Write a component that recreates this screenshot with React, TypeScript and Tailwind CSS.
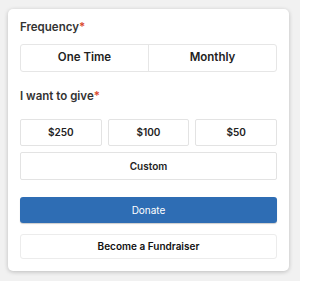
const amounts = ["$250", "$100", "$50"];

const Label = ({ text }: { text: string }) => (
  <p className="text-[11.5px] leading-5 font-semibold text-[#333]">
    {text}
    <span className="text-[#d9472b]">*</span>
  </p>
);

export default function App() {
  return (
    <div
      className="w-[300px] h-[281px] bg-[#f1f1f1] pt-[9px] pl-[8px]"
      style={{ fontFamily: "Inter, 'Noto Sans', sans-serif" }}
    >
      <div className="w-[281px] h-[262px] bg-white rounded-[5px] shadow-[0_1px_4px_rgba(0,0,0,0.22)] px-3 pt-2">
        <Label text="Frequency" />

        {/* frequency toggle */}
        <div className="mt-[7px] flex h-[28px] border border-[#e6e6e6] rounded-[3px]">
          <button className="flex-1 text-[11.5px] font-semibold text-[#222] border-r border-[#e6e6e6]">
            One Time
          </button>
          <button className="flex-1 text-[11.5px] font-semibold text-[#222]">
            Monthly
          </button>
        </div>

        <div className="mt-[14px]">
          <Label text="I want to give" />
        </div>

        <div className="mt-[13px] grid grid-cols-3 gap-[6px]">
          {amounts.map((a) => (
            <button
              key={a}
              className="h-[27px] border border-[#e3e3e3] rounded-[2px] text-[10px] font-semibold text-[#222]"
            >
              {a}
            </button>
          ))}
        </div>
        <button className="mt-[6px] w-full h-[28px] border border-[#e3e3e3] rounded-[2px] text-[10px] font-semibold text-[#222]">
          Custom
        </button>

        <button className="mt-[17px] w-full h-[26px] bg-[#2e6db4] rounded-[3px] text-[10px] text-white shadow-[0_1px_1px_rgba(0,0,0,0.2)]">
          Donate
        </button>
        <button className="mt-[11px] w-full h-[25px] border border-[#ececec] rounded-[3px] text-[10px] font-semibold text-[#111]">
          Become a Fundraiser
        </button>
      </div>
    </div>
  );
}
